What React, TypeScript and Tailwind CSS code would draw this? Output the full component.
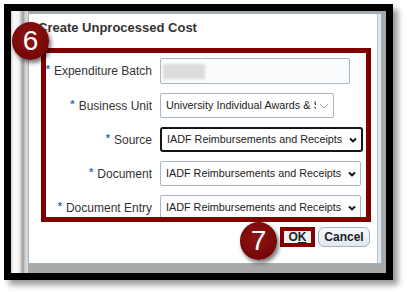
import React from "react";

const FONT = "font-['Liberation_Sans',Arial,sans-serif]";

function Chevron({ light }: { light?: boolean }) {
  if (light) {
    return (
      <svg width="10" height="6" viewBox="0 0 10 6" fill="none" className="shrink-0">
        <path d="M1 1L5 5L9 1" stroke="#9aa6b3" strokeWidth="1" />
      </svg>
    );
  }
  return (
    <svg width="8" height="6" viewBox="0 0 8 6" fill="none" className="shrink-0">
      <path d="M1 1.5L4 4.5L7 1.5" stroke="#111" strokeWidth="1.9" />
    </svg>
  );
}

function Label({ text }: { text: string }) {
  return (
    <div className="w-[106px] shrink-0 flex justify-end items-center text-[12px] text-[#333]">
      <span className="text-[#2f6fba] text-[11px] font-bold leading-none self-start mt-[2px] mr-[4px]">*</span>
      <span className="whitespace-nowrap">{text}</span>
    </div>
  );
}

function SelectBox({
  text,
  width,
  dark,
  light,
}: {
  text: string;
  width: string;
  dark?: boolean;
  light?: boolean;
}) {
  return (
    <div
      className={`${width} h-[25px] shrink-0 flex items-center pl-[5px] pr-[4px] gap-[3px] bg-white ${
        dark ? "border-2 border-[#151515] rounded-[3px]" : "border border-[#aab6c3] rounded-[2px]"
      }`}
    >
      <span className="flex-1 overflow-hidden whitespace-nowrap text-[10.8px] text-[#222]">{text}</span>
      <Chevron light={light} />
    </div>
  );
}

const ROWS = [
  { label: "Business Unit", text: "University Individual Awards & Scholarships", width: "w-[174px]", light: true },
  { label: "Source", text: "IADF Reimbursements and Receipts", width: "w-[203px]", dark: true },
  { label: "Document", text: "IADF Reimbursements and Receipts", width: "w-[201px]" },
  { label: "Document Entry", text: "IADF Reimbursements and Receipts", width: "w-[201px]" },
];

function Step({ n, className }: { n: string; className: string }) {
  return (
    <div
      className={`absolute w-[37px] h-[38px] rounded-full bg-[radial-gradient(circle_at_45%_40%,#8e1414,#6b0202)] shadow-[2px_3px_4px_rgba(0,0,0,0.55)] flex items-center justify-center text-white text-[28px] leading-none ${className}`}
    >
      {n}
    </div>
  );
}

export default function App() {
  return (
    <div className={`relative w-[407px] h-[292px] bg-white pt-[4px] pl-[4px] ${FONT}`}>
      <div className="w-[389px] h-[276px] border-[7px] border-black bg-[#a8a8a8] flex shadow-[5px_5px_6px_rgba(0,0,0,0.4)]">
        <div className="w-[17px] shrink-0 bg-[linear-gradient(to_right,#d4d4d4_0px,#fbfbfb_3px,#f2f2f2_8px,#9c9c9c_12px,#cfcfcf_14px,#dedede_17px)]" />
        <div className="flex-1 pt-[2px] pr-[4px] pb-[9px]">
          <div className="h-full bg-white border border-[#9fb1c4] shadow-[inset_-3px_0_0_#dfe6ee,inset_-4px_0_0_#b7c3cf] flex flex-col">
            <div className="h-[34px] pt-[6px] pl-[9px] text-[13px] font-bold text-[#333] leading-[16px]">
              Create Unprocessed Cost
            </div>
            <div className="ml-[12px] w-[330px] h-[174px] border-[5px] border-[#800000] overflow-hidden flex flex-col gap-[9px] pt-[5px]">
              <div className="flex items-center gap-[8px]">
                <Label text="Expenditure Batch" />
                <div className="w-[190px] h-[26px] border border-[#aab6c3] rounded-[2px] bg-[#f9fbfd] flex items-center pl-[2px]">
                  <div className="w-[42px] h-[15px] bg-[#dcdcdc] blur-[1px]" />
                </div>
              </div>
              {ROWS.map((r) => (
                <div key={r.label} className="flex items-center gap-[8px]">
                  <Label text={r.label} />
                  <SelectBox text={r.text} width={r.width} dark={r.dark} light={r.light} />
                </div>
              ))}
            </div>
            <div className="flex justify-end items-center gap-[3px] pr-[11px] mt-[5px]">
              <div className="w-[35px] h-[20px] border-[4px] border-[#800000] bg-[#eef1f4] flex items-center justify-center text-[12px] font-bold text-[#1d1d1d]">
                O<span className="underline">K</span>
              </div>
              <div className="w-[52px] h-[20px] rounded-[6px] border border-[#a3b3c4] bg-[linear-gradient(#f7f9fb,#e2e8ef)] flex items-center justify-center text-[12px] font-bold text-[#1d1d1d]">
                Cancel
              </div>
            </div>
          </div>
        </div>
      </div>
      <Step n="6" className="left-[12px] top-[22px]" />
      <Step n="7" className="left-[240px] top-[222px]" />
    </div>
  );
}
